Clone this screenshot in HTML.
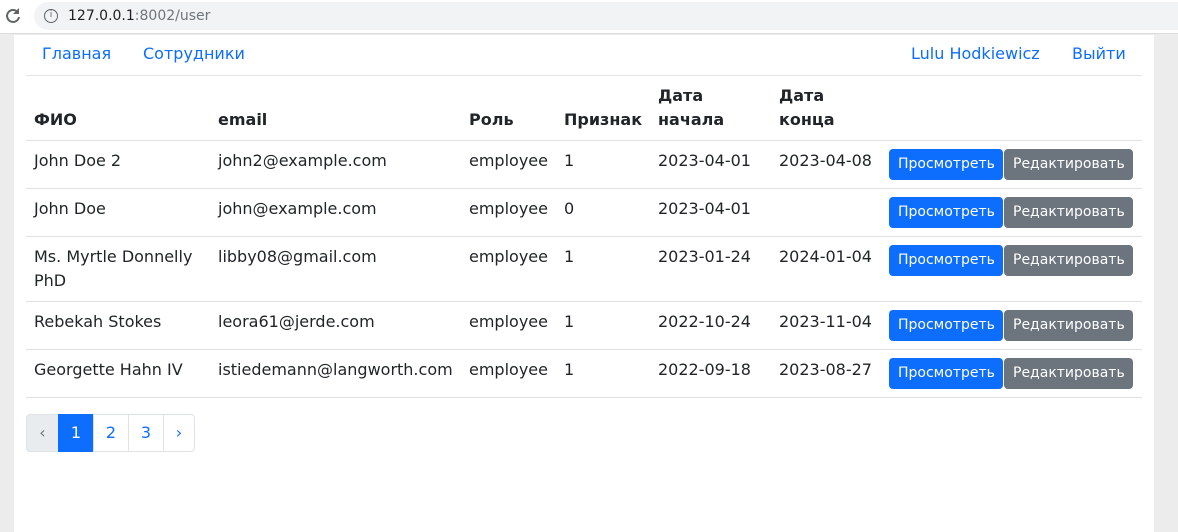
<!DOCTYPE html>
<html><head><meta charset="utf-8"><style>
*{box-sizing:border-box}
body{margin:0;width:1178px;height:532px;overflow:hidden;background:#ececec;font-family:"DejaVu Sans","Liberation Sans",sans-serif;color:#212529}
.bar{position:absolute;left:0;top:0;width:1178px;height:34px;background:#fff;border-bottom:1px solid #dadce0}
.pill{position:absolute;left:34px;top:2px;width:1160px;height:28px;border-radius:14px;background:#f1f3f4;font-size:14px;line-height:28px;padding-left:34px;color:#202124}
.pill span{color:#70757a}
.page{position:absolute;left:14px;top:35px;width:1140px;height:497px;background:#fff}
.nav{position:absolute;left:12px;top:0;width:1116px;height:41px;border-bottom:1px solid #e6e6e6;font-size:16px;color:#0d6efd}
.nav a{position:absolute;top:9px}
table{position:absolute;left:12px;top:41px;width:1116px;border-collapse:collapse;font-size:16px;table-layout:fixed}
th{text-align:left;vertical-align:bottom;padding:8px;line-height:24px;border-bottom:1px solid #dee2e6;font-weight:bold}
td{vertical-align:top;padding:8px;line-height:24px;border-bottom:1px solid #dee2e6}
.b{display:inline-block;font-size:14px;color:#fff;height:31px;line-height:31px;padding:0 9px;border-radius:4px;vertical-align:top}
.p{background:#0d6efd;width:114px}.e{background:#6c757d;width:129px;margin-left:1px}
td.btn{padding:8px 0 8px 8px;white-space:nowrap;font-size:0}
.pg{position:absolute;left:12px;top:379px;display:flex;font-size:16px}
.pg div{height:38px;line-height:36px;border:1px solid #dee2e6;margin-left:-1px;text-align:center;color:#0d6efd}
</style></head><body>
<div class="bar"><svg style="position:absolute;left:4px;top:7px" width="18" height="18" viewBox="0 0 18 18"><path d="M14 5.5A6 6 0 1 0 15 10" fill="none" stroke="#5f6368" stroke-width="2"/><path d="M15 1v6h-6z" fill="#5f6368"/></svg>
<div class="pill"><span style="position:absolute;left:10px;top:7px;width:14px;height:14px;border:1.5px solid #5f6368;border-radius:50%;font-size:9px;line-height:11px;text-align:center;color:#5f6368">i</span>127.0.0.1<span>:8002/user</span></div></div>
<div class="page">
<div class="nav"><a style="left:16px">Главная</a><a style="left:117px">Сотрудники</a><a style="left:885px">Lulu Hodkiewicz</a><a style="left:1046px">Выйти</a></div>
<table>
<colgroup><col style="width:184px"><col style="width:251px"><col style="width:95px"><col style="width:94px"><col style="width:121px"><col style="width:110px"><col></colgroup>
<tr><th>ФИО</th><th>email</th><th>Роль</th><th>Признак</th><th>Дата начала</th><th>Дата конца</th><th></th></tr>
<tr><td>John Doe 2</td><td>john2@example.com</td><td>employee</td><td>1</td><td>2023-04-01</td><td>2023-04-08</td><td class="btn"><span class="b p">Просмотреть</span><span class="b e">Редактировать</span></td></tr>
<tr><td>John Doe</td><td>john@example.com</td><td>employee</td><td>0</td><td>2023-04-01</td><td></td><td class="btn"><span class="b p">Просмотреть</span><span class="b e">Редактировать</span></td></tr>
<tr><td>Ms. Myrtle Donnelly PhD</td><td>libby08@gmail.com</td><td>employee</td><td>1</td><td>2023-01-24</td><td>2024-01-04</td><td class="btn"><span class="b p">Просмотреть</span><span class="b e">Редактировать</span></td></tr>
<tr><td>Rebekah Stokes</td><td>leora61@jerde.com</td><td>employee</td><td>1</td><td>2022-10-24</td><td>2023-11-04</td><td class="btn"><span class="b p">Просмотреть</span><span class="b e">Редактировать</span></td></tr>
<tr><td>Georgette Hahn IV</td><td>istiedemann@langworth.com</td><td>employee</td><td>1</td><td>2022-09-18</td><td>2023-08-27</td><td class="btn"><span class="b p">Просмотреть</span><span class="b e">Редактировать</span></td></tr>
</table>
<div class="pg"><div style="width:33px;margin-left:0;background:#e9ecef;color:#6c757d;border-radius:4px 0 0 4px">‹</div><div style="width:36px;background:#0d6efd;border-color:#0d6efd;color:#fff">1</div><div style="width:36px">2</div><div style="width:36px">3</div><div style="width:32px;border-radius:0 4px 4px 0">›</div></div>
</div>
</body></html>
